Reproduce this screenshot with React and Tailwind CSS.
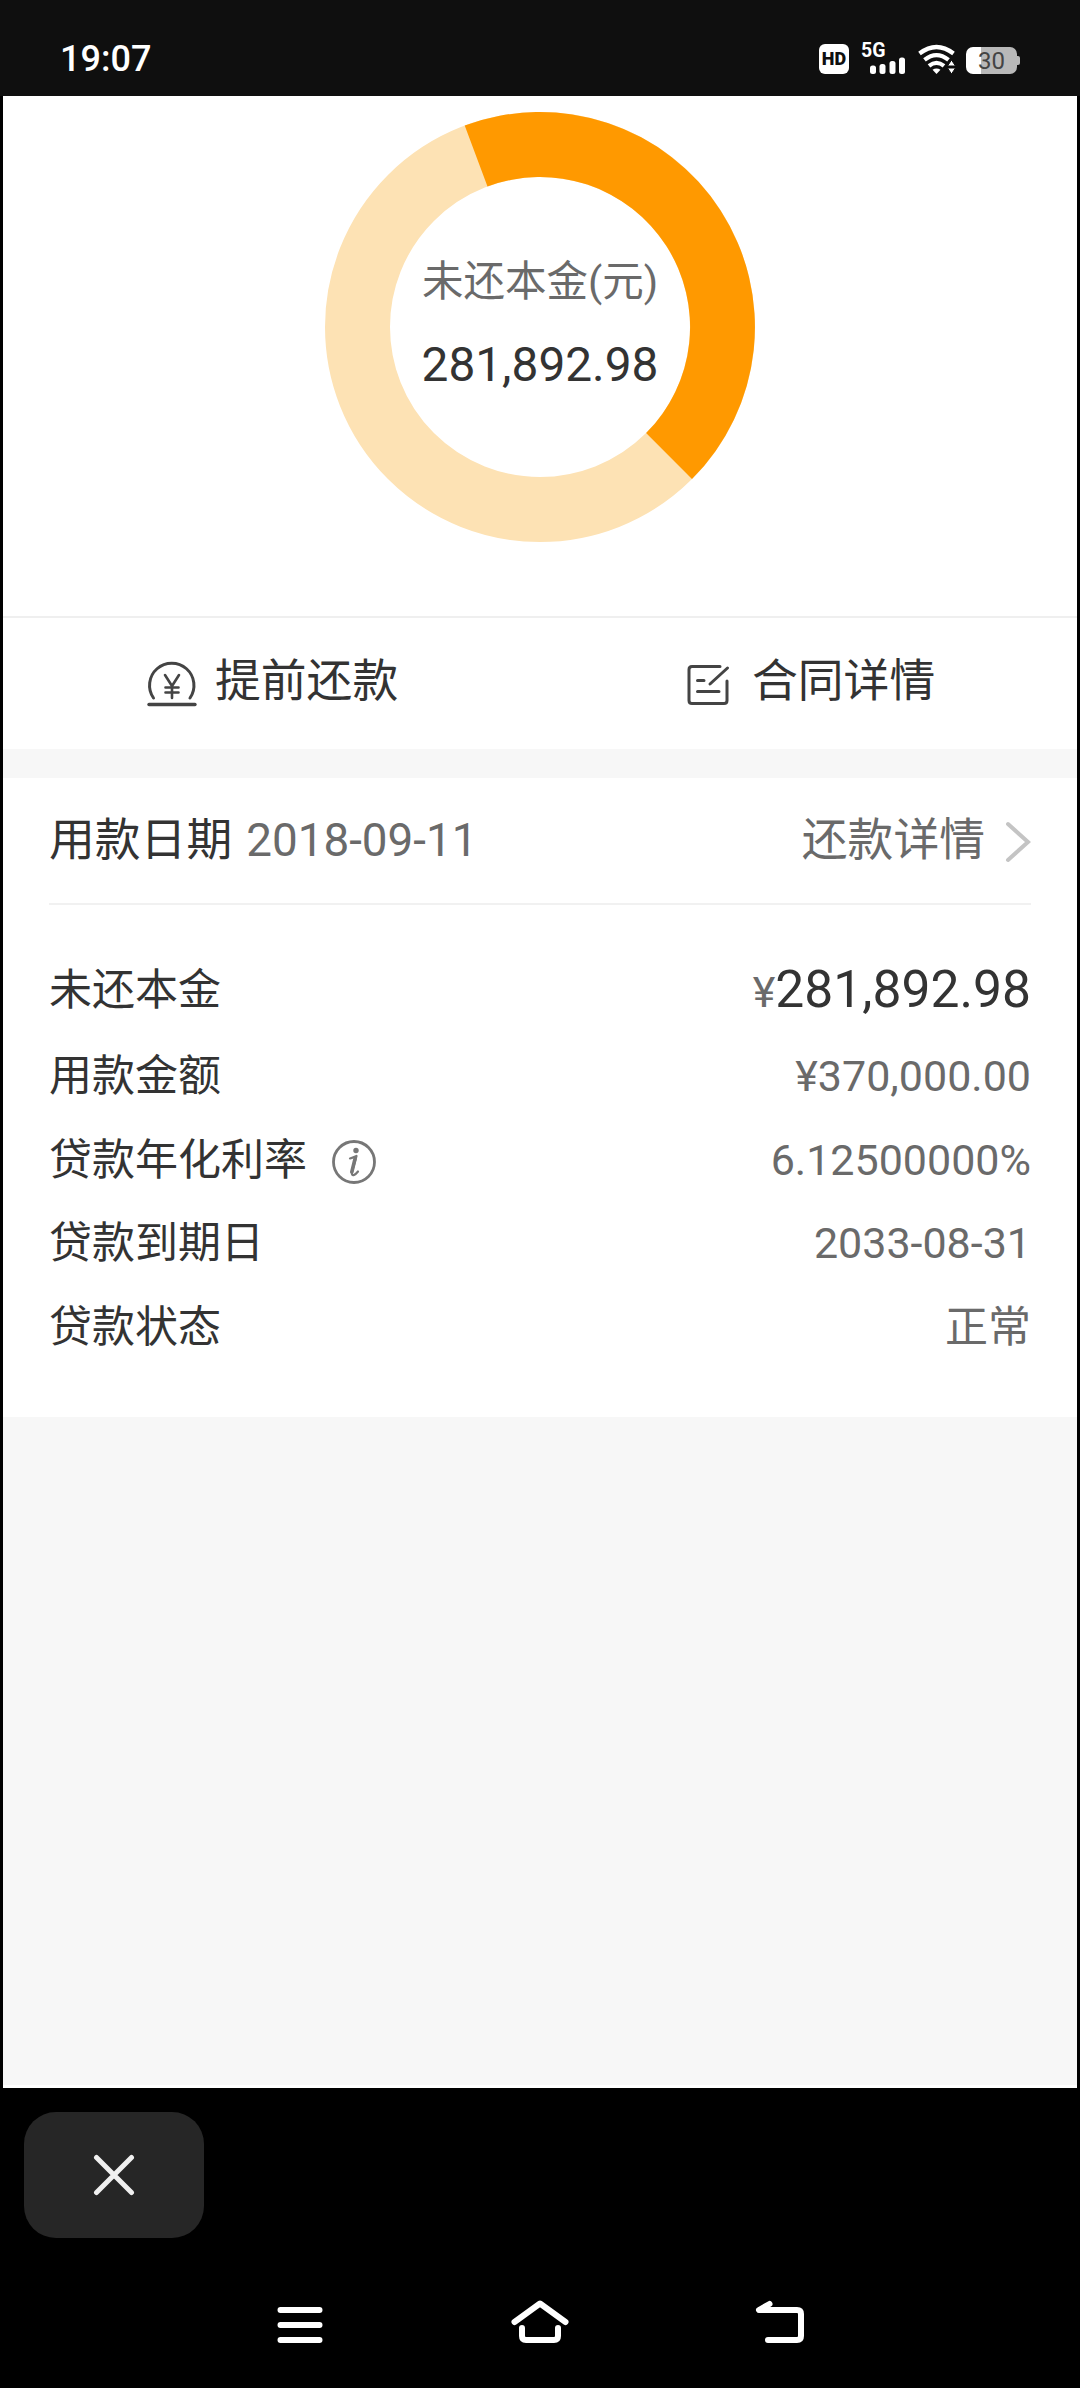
const loan = {
    principal: "281,892.98",
    date: "2018-09-11",
    rows: [
        { label: "用款金额", value: "¥370,000.00" },
        { label: "贷款年化利率", value: "6.12500000%", info: true },
        { label: "贷款到期日", value: "2033-08-31" },
        { label: "贷款状态", value: "正常" },
    ],
};

export default function App() {
    return (
        <div className="w-[1080px] h-[2388px] flex flex-col bg-black overflow-hidden font-[Roboto,'Noto_Sans_CJK_SC',sans-serif] text-[#333333]">
            <StatusBar />
            <main className="mx-[3px] h-[1992px] shrink-0 flex flex-col bg-[#f7f7f7] border-b-[3px] border-white">
                <Chart />
                <div className="h-[133px] shrink-0 grid grid-cols-2 bg-white border-t-2 border-[#efefef] text-[45.8px] leading-none">
                    <button className="flex items-center pl-[144px]">
                        <YenIcon />
                        <span className="ml-[18px] pb-[4px]">提前还款</span>
                    </button>
                    <button className="flex items-center pl-[146px]">
                        <ContractIcon />
                        <span className="ml-[22px] pb-[4px]">合同详情</span>
                    </button>
                </div>
                <section className="mt-[29px] h-[639px] shrink-0 px-[46px] bg-white">
                    <div className="h-[127px] flex items-center border-b-2 border-[#f1f1f1] text-[45.8px] leading-none">
                        <p>用款日期</p>
                        <p className="ml-[14px] text-[#6a6a6a]">{loan.date}</p>
                        <p className="ml-auto text-[#6a6a6a]">还款详情</p>
                        <svg className="ml-[20px] mt-[3px] w-[26px] h-[42px]" viewBox="0 0 26 42" fill="none" stroke="#c4c4c4" strokeWidth="4" strokeLinecap="round">
                            <path d="M3 3L23 21L3 39" />
                        </svg>
                    </div>
                    <div className="mt-[40px] h-[90px] flex items-center justify-between leading-none">
                        <p className="text-[43px]">未还本金</p>
                        <p className="text-[51.6px]">
                            <span className="text-[43px] text-[#6a6a6a]">¥</span>{loan.principal}
                        </p>
                    </div>
                    {loan.rows.map((row) => (
                        <div className="h-[83.5px] flex items-center text-[43px] leading-none" key={row.label}>
                            <p>{row.label}</p>
                            {row.info && <InfoIcon />}
                            <p className="ml-auto text-[#6a6a6a]">{row.value}</p>
                        </div>
                    ))}
                </section>
            </main>
            <div className="pt-6 pl-6">
                <button className="w-[180px] h-[126px] flex items-center justify-center rounded-[32px] bg-[#262626]">
                    <svg className="w-[42px] h-[42px]" viewBox="0 0 42 42" stroke="#f0f0f0" strokeWidth="5" strokeLinecap="round">
                        <path d="M3.5 3.5L38.5 38.5M38.5 3.5L3.5 38.5" />
                    </svg>
                </button>
            </div>
            <NavBar />
        </div>
    );
}

const StatusBar = () => {
    return (
        <header className="h-24 shrink-0 flex items-start bg-[#0f0f0f] text-white">
            <p className="ml-[60px] mt-[40px] text-[36px] leading-[38px] font-medium">19:07</p>
            <div className="ml-auto mt-[44px] mr-[60px] flex items-start">
                <span className="w-[30px] h-[30px] flex items-center justify-center rounded-[6px] bg-white text-[#0f0f0f] text-[18px] leading-none font-black">HD</span>
                <div className="ml-[12px] relative w-[46px] h-[30px]">
                    <span className="absolute left-0 top-0 text-[19.5px] leading-[14px] font-bold">5G</span>
                    <svg className="w-full h-full" viewBox="0 0 46 30" fill="#fff">
                        <rect x="9" y="21.500" width="6" height="8.500" rx="2.500" />
                        <rect x="18.500" y="20" width="6" height="10" rx="2.500" />
                        <rect x="28.500" y="17" width="6" height="13" rx="2.500" />
                        <rect x="38" y="13.500" width="6" height="16.500" rx="2.500" />
                    </svg>
                </div>
                <svg className="ml-[11px] w-[38px] h-[30px]" viewBox="0 0 38 30" fill="none" stroke="#fff" strokeWidth="4.200">
                    <path d="M1.500 9.500Q18.500 -3.500 35.500 9.500" />
                    <path d="M6.500 15.800Q18.500 6.300 30.500 15.800" />
                    <path d="M11 21.800Q18.500 15.800 26 21.800" />
                    <path d="M14.500 25.800Q18.500 23.300 22.500 25.800L18.500 30Z" fill="#fff" stroke="none" />
                    <path d="M33.500 16L37.500 22H29.500ZM33.500 30L37.500 24H29.500Z" fill="#fff" stroke="#0f0f0f" strokeWidth="1" />
                </svg>
                <div className="ml-[10px] mt-[3px] flex items-center">
                    <div className="w-[51px] h-[27px] flex items-center justify-center rounded-[7px] bg-linear-to-r from-white from-30% to-[#b8b8b8] to-30% text-[#444444] text-[24px] leading-none">30</div>
                    <div className="w-[3px] h-[9px] rounded-r-[2px] bg-[#b8b8b8]" />
                </div>
            </div>
        </header>
    );
};

// ring is 430px wide, the paid share runs from -20.5deg to 135deg
const Chart = () => {
    return (
        <div className="h-[520px] shrink-0 pt-[16px] bg-white">
            <div className="relative mx-auto w-[430px] h-[430px]">
                <svg className="w-full h-full" viewBox="-215 -215 430 430">
                    <circle r="182.500" fill="none" stroke="#fde2b4" strokeWidth="65" />
                    <path d="M-75.300 -201.400A215 215 0 0 1 152 152L106.100 106.100A150 150 0 0 0 -52.500 -140.500Z" fill="#ff9900" />
                </svg>
                <div className="absolute inset-0 flex flex-col items-center leading-none">
                    <p className="mt-[149px] text-[41.5px] text-[#6a6a6a]">未还本金(元)</p>
                    <p className="mt-[39px] text-[47.8px]">{loan.principal}</p>
                </div>
            </div>
        </div>
    );
};

const YenIcon = () => {
    return (
        <svg className="w-[50px] h-[46px]" viewBox="0 0 50 46" fill="none" stroke="#444" strokeWidth="3" strokeLinecap="round">
            <path d="M6.500 37A22.200 22.200 0 1 1 43 37" />
            <path d="M2 43.500H48" strokeWidth="3.400" />
            <path d="M18 14L25 25L32 14M25 25V37M18.500 26.500H31.500M18.500 31.500H31.500" strokeWidth="2.600" />
        </svg>
    );
};

const ContractIcon = () => {
    return (
        <svg className="mt-[2px] w-[44px] h-[42px]" viewBox="0 0 44 42" fill="none" stroke="#444" strokeWidth="3" strokeLinecap="round">
            <path d="M34 2.500H6Q3 2.500 3 5.500V36.500Q3 39.500 6 39.500H38Q41 39.500 41 36.500V17" />
            <path d="M41.500 4L24 20M11.500 16.500H18M11.500 27.500H33" />
        </svg>
    );
};

const InfoIcon = () => {
    return (
        <svg className="ml-[24px] mt-[3px] w-[46px] h-[46px]" viewBox="0 0 46 46" fill="none" stroke="#777" strokeWidth="2.800" strokeLinecap="round" strokeLinejoin="round">
            <circle cx="23" cy="23" r="20.500" />
            <circle cx="25" cy="11.500" r="2.700" fill="#777" stroke="none" />
            <path d="M19 19.500Q22.500 18.500 25.500 17L21 33Q20.400 36.800 23 36Q25 35 27 32.500" strokeWidth="2.200" />
            <path d="M24 20L20.800 33" strokeWidth="3.600" />
        </svg>
    );
};

const NavBar = () => {
    const icons = [
        "M9.500 12H48.500M9.500 27H48.500M9.500 42H48.500",
        "M3.500 24L29 5.500L54.500 24M11 30V38Q11 42 15 42H43Q47 42 47 38V30",
        "M18.500 6L8 12H46Q50 12 50 16V38Q50 42 46 42H17",
    ];
    return (
        <nav className="mt-[60px] pl-[271px] flex gap-[182px]">
            {icons.map((d) => (
                <svg className="w-[58px] h-[50px]" viewBox="0 0 58 50" fill="none" stroke="#fff" strokeWidth="6" strokeLinecap="round" strokeLinejoin="round" key={d}>
                    <path d={d} />
                </svg>
            ))}
        </nav>
    );
};
